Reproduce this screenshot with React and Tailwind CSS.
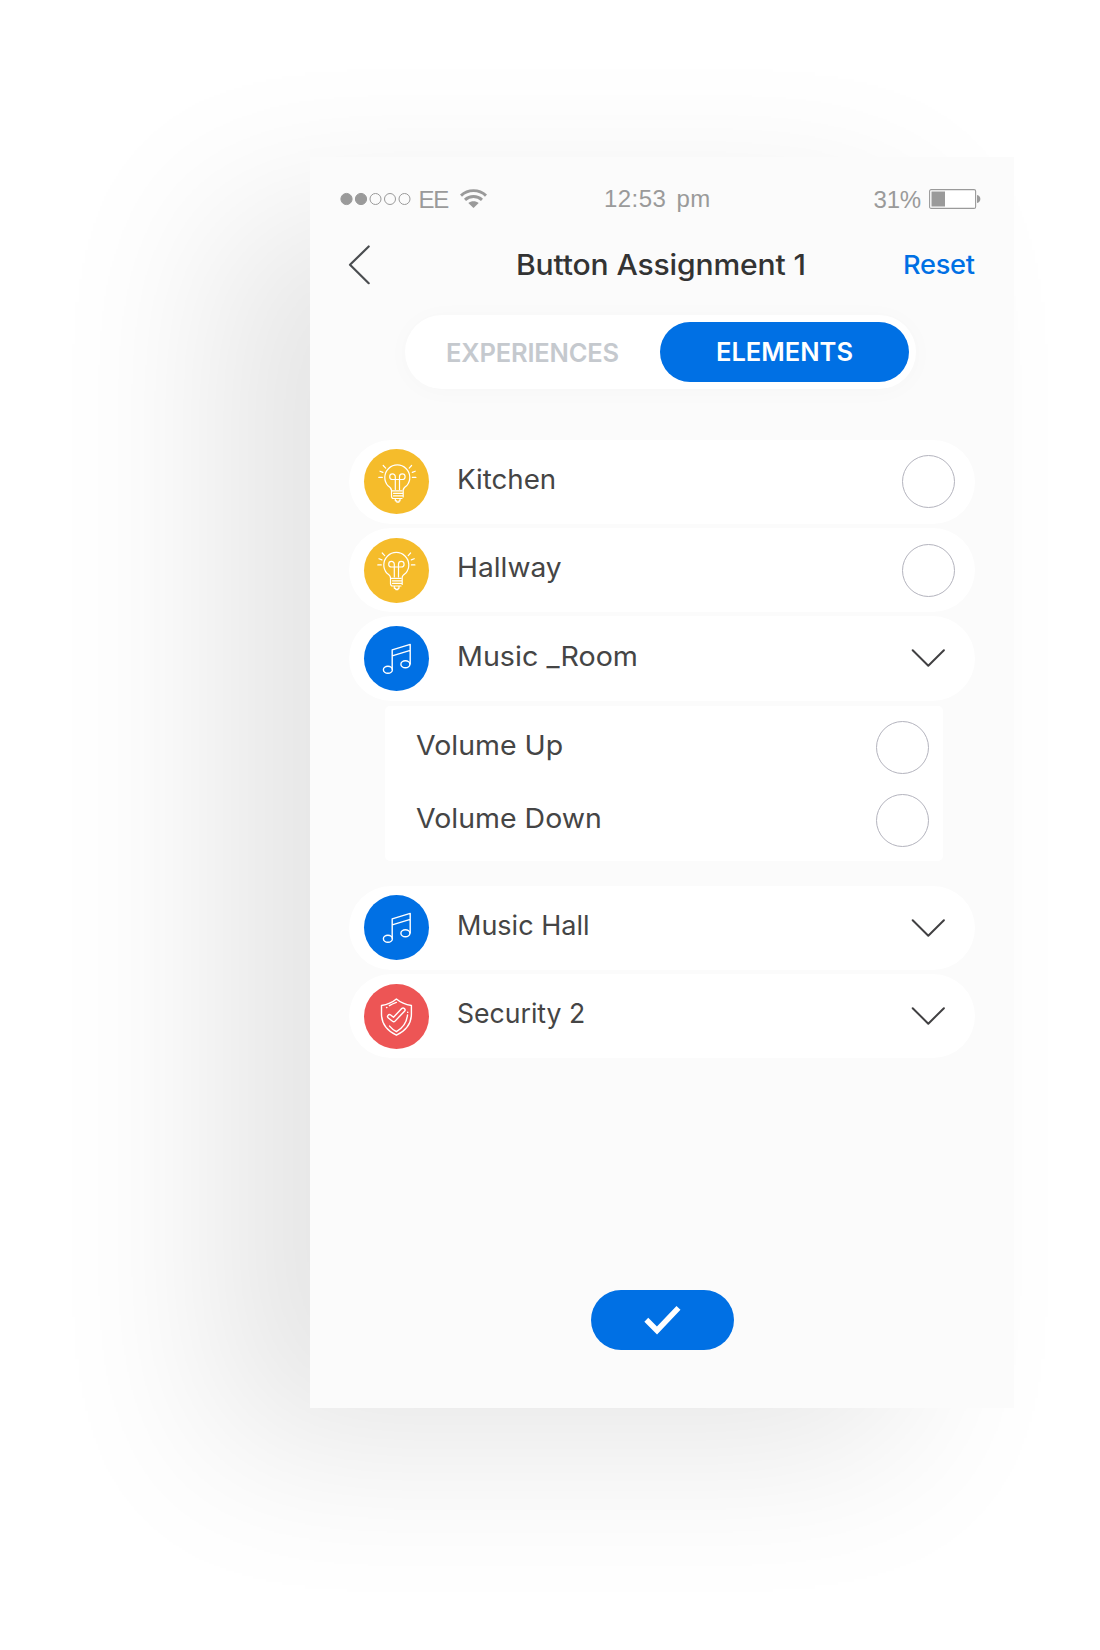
import React from "react";

const Label = ({ children, className = "" }) => (
  <span className={`origin-left whitespace-nowrap text-[27px] leading-[34px] text-[#454545] ${className}`}>{children}</span>
);

const Radio = () => <span className="block size-[53px] shrink-0 rounded-full border border-[#b4b4be] bg-white" />;

const ChevronDown = () => (
  <svg width="34" height="20" viewBox="0 0 34 20" fill="none" stroke="#414042" strokeWidth="2" strokeLinecap="round" strokeLinejoin="round" className="mr-[10px]">
    <path d="M1.7 2.200 17.300 17.700 32.900 2.200" />
  </svg>
);

const Bulb = ({ className = "" }) => (
  <svg width="65" height="65" viewBox="0 0 65 65" fill="none" stroke="#fff" strokeWidth="1.2" strokeLinecap="round" strokeLinejoin="round" className={className}>
    <path d="M27.500 41.500c0-2-1.300-3.300-3.500-4.700a12.500 12.500 0 1 1 18.600 0c-2.200 1.400-3.500 2.700-3.500 4.700" />
    <path d="M31.300 40.500V27.700a2.800 2.800 0 1 0-2.800 2.800h9.800a2.800 2.800 0 1 0-2.800-2.800v12.800" />
    <path d="M27.500 41.800h10.500M27.500 41.800v5.200c0 1.500.8 2.500 2 2.500h8.500M29.500 44.300h9.500M29.500 46.900h9.500M39.200 42v6M31.300 49.800v2h1.500v1.300h2.200v-1.300h1v-2" />
    <path d="m19.200 16.500 2.500 2.600M16 22.200l2.900 1.200M14.800 28.400h3.500M47.600 16.500l-2.400 2.600M51.200 22.200l-2.900 1.200M51.900 28.400h-3.500" />
  </svg>
);

const Music = () => (
  <svg width="65" height="65" viewBox="0 0 65 65" fill="none" stroke="#fff" strokeWidth="1.400" strokeLinejoin="round">
    <ellipse cx="23.900" cy="43.700" rx="4.500" ry="3.500" />
    <ellipse cx="41.400" cy="38.200" rx="4.500" ry="3.500" />
    <path d="M28.200 43.800V23.800L46.200 18.400v20M28.200 29.800 46.200 24.400" />
  </svg>
);

const Shield = () => (
  <svg width="65" height="65" viewBox="0 0 65 65" fill="none" stroke="#fff" strokeWidth="1.400" strokeLinecap="round" strokeLinejoin="round">
    <path d="M32.400 15c4.700 4 9.700 5.700 15 6.500v8.500c0 9.500-5.700 16.700-15 21.200-9.300-4.500-14.900-11.700-14.900-21.200v-8.500c5.300-.8 10.200-2.500 14.900-6.500Z" />
    <path d="M32.400 18.400c-2.300.8-4.800 1.800-7 3.300M22.900 23.400l-.3.200M43.500 31c-.8 7.500-4.700 13-11.100 16.700-2.800-1.600-5-3.400-6.800-5.600M43.700 28.300v.1" />
    <path d="M25.500 32.500 29.700 35.800 39.100 25.900" strokeWidth="5.200" />
    <path d="M25.500 32.500 29.700 35.800 39.100 25.900" stroke="#ed5555" strokeWidth="2.400" />
  </svg>
);

const Row = ({ color, icon, label, stretch = "", children }) => (
  <div className="flex h-[84.500px] items-center rounded-full bg-white pl-[15px] pr-[20px]">
    <span className={`size-[65px] shrink-0 rounded-full ${color}`}>{icon}</span>
    <Label className={`-mt-[3.500px] ml-[28px] ${stretch}`}>{label}</Label>
    <span className="ml-auto">{children}</span>
  </div>
);

const StatusBar = () => (
  <div className="flex h-[44px] items-center pl-[29.500px] pr-[33px] font-['Liberation_Sans',sans-serif] text-[24px] text-[#9a9a9a]">
    <div className="flex w-[264.500px] items-center">
      <svg width="72" height="14" viewBox="0 0 72 14" fill="none" stroke="#9a9a9a" strokeWidth="1">
        <circle cx="6.500" cy="7" r="5.600" fill="#9a9a9a" />
        <circle cx="21" cy="7" r="5.600" fill="#9a9a9a" />
        <circle cx="35.500" cy="7" r="5.500" />
        <circle cx="50" cy="7" r="5.500" />
        <circle cx="64.500" cy="7" r="5.500" />
      </svg>
      <span className="ml-[7px] mt-[1px] tracking-[-1.300px]">EE</span>
      <svg width="28" height="20" viewBox="0 0 28 20" fill="none" stroke="#9a9a9a" strokeWidth="2.900" className="ml-[12.500px]">
        <path d="M1 6.600c7-6.700 18-6.700 25 0M5 10.900c4.700-4.500 12.300-4.500 17 0" />
        <path d="M8.300 14c3-2.500 7.400-2.500 10.400 0L13.500 19Z" fill="#9a9a9a" stroke="none" />
      </svg>
    </div>
    <span className="whitespace-pre tracking-[0.450px] [word-spacing:3px]">12:53 pm</span>
    <div className="ml-auto flex items-center">
      <span className="mt-[1px] tracking-[-0.200px]">31%</span>
      <svg width="52" height="20" viewBox="0 0 52 20" className="ml-[8px]">
        <rect x=".6" y=".6" width="46" height="18.800" rx="1.500" fill="#fff" stroke="#9a9a9a" strokeWidth="1.100" />
        <rect x="2.500" y="2.500" width="13.500" height="15" fill="#9a9a9a" />
        <path d="M48 6c4.500 1 4.500 7 0 8Z" fill="#9a9a9a" />
      </svg>
    </div>
  </div>
);

export default function App() {
  return (
    <div className="h-[1650px] w-[1100px] overflow-hidden bg-white pl-[310px] pt-[157px] font-['Inter',sans-serif]">
      <main className="flex h-[1251px] w-[704px] flex-col bg-[#fbfbfb] pt-[20px] shadow-[-102px_48px_160px_-12px_rgba(0,0,0,0.105)]">
        <StatusBar />

        <header className="mt-[14px] flex h-[60px] items-center pl-[37px] pr-[39px]">
          <svg width="24" height="42" viewBox="0 0 24 42" fill="none" stroke="#4a4d50" strokeWidth="2.200" strokeLinecap="round" strokeLinejoin="round">
            <path d="M21.700 2.500 3 20.800 21.700 39.200" />
          </svg>
          <h1 className="-mt-px ml-[145px] origin-left scale-x-[1.075] whitespace-nowrap text-[28px] font-medium tracking-[-0.150px] text-[#333]">Button Assignment 1</h1>
          <button className="-mt-[2px] ml-auto origin-right scale-x-[1.045] text-[26px] font-medium tracking-[-0.200px] text-[#0070e4]">Reset</button>
        </header>

        <nav className="ml-[95px] mt-[20px] flex h-[74px] w-[511px] items-center rounded-full bg-white pr-[7px] text-[25.500px] font-semibold shadow-[0_2px_24px_rgba(0,0,0,0.025)]">
          <span className="flex-1 pt-[2px] text-center tracking-[-0.200px] text-[#c5c9ce]">EXPERIENCES</span>
          <span className="flex h-[60px] w-[249px] items-center justify-center rounded-full bg-[#0070e4] pt-px text-white">ELEMENTS</span>
        </nav>

        <section className="ml-[39px] mt-[50.500px] flex w-[626px] flex-col gap-[3.800px]">
          <Row color="bg-[#f5bc2b]" icon={<Bulb />} label="Kitchen" stretch="scale-x-[1.025]"><Radio /></Row>
          <Row color="bg-[#f5bc2b]" icon={<Bulb className="-translate-x-px -translate-y-[1.500px]" />} label="Hallway" stretch="scale-x-[1.043]"><Radio /></Row>
          <Row color="bg-[#0070e4]" icon={<Music />} label="Music _Room" stretch="scale-x-[1.062]"><ChevronDown /></Row>
          <div className="ml-[36px] mt-[2px] flex h-[155px] w-[558px] flex-col gap-[20px] rounded-[5px] bg-white pl-[31px] pr-[14px] pt-[15px]">
            <div className="flex items-center justify-between"><Label className="-mt-[4px] scale-x-[1.055]">Volume Up</Label><Radio /></div>
            <div className="flex items-center justify-between"><Label className="-mt-[4px] scale-x-[1.055]">Volume Down</Label><Radio /></div>
          </div>
          <div className="mt-[20.500px] flex flex-col gap-[3.800px]">
            <Row color="bg-[#0070e4]" icon={<Music />} label="Music Hall"><ChevronDown /></Row>
            <Row color="bg-[#ed5555]" icon={<Shield />} label="Security 2" stretch="scale-x-[0.985]"><ChevronDown /></Row>
          </div>
        </section>

        <button className="mx-auto mb-[58px] mt-auto flex h-[60px] w-[143px] items-center justify-center rounded-full bg-[#0070e4]">
          <svg width="37" height="30" viewBox="0 0 37 30" fill="none">
            <path d="M2.300 14.800 13 25.500 34.500 2.800" stroke="#fff" strokeWidth="5.500" strokeLinejoin="miter" />
          </svg>
        </button>
      </main>
    </div>
  );
}
